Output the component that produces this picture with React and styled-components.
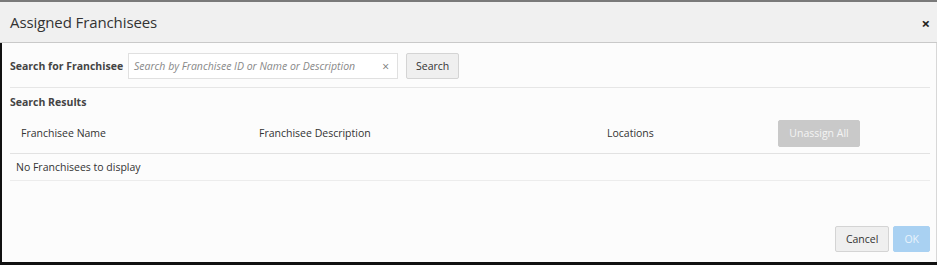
import React from 'react'
import styled, { createGlobalStyle } from 'styled-components'

const GlobalStyle = createGlobalStyle`
  html, body {
    margin: 0;
    padding: 0;
    background: #ffffff;
  }
  body {
    font-family: "Open Sans", "Noto Sans", sans-serif;
    color: #333;
  }
`

const Dialog = styled.div`
  width: 937px;
  height: 265px;
  box-sizing: border-box;
  border-top: 2px solid #7a7a7a;
  border-bottom: 3px solid #111;
  display: flex;
  flex-direction: column;
  background: #fcfcfc;
`

const Header = styled.div`
  height: 40px;
  background: #f0f0f0;
  border-bottom: 1px solid #c9c9c9;
  display: flex;
  align-items: center;
  justify-content: space-between;
  padding: 0 7px 0 10px;
`

const Title = styled.div`
  font-size: 15px;
  color: #333;
  letter-spacing: -0.1px;
`

const Close = styled.div`
  font-size: 15px;
  font-weight: 700;
  color: #222;
  margin-top: 2px;
`

const Body = styled.div`
  flex: 1;
  border-left: 2px solid #111;
  border-right: 1px solid #d8d8d8;
  display: flex;
  flex-direction: column;
  padding: 10px 6px 0 8px;
`

const SearchRow = styled.div`
  display: flex;
  align-items: center;
  height: 26px;
  padding-bottom: 8px;
  border-bottom: 1px solid #e6e6e6;
`

const Label = styled.div`
  font-size: 10.5px;
  font-weight: 700;
  color: #444;
  width: 118px;
`

const InputBox = styled.div`
  width: 270px;
  height: 26px;
  border: 1px solid #e0e0e0;
  background: #fff;
  display: flex;
  align-items: center;
  justify-content: space-between;
  padding: 0 8px 0 5px;
  box-sizing: border-box;
  margin-right: 8px;
`

const Placeholder = styled.span`
  font-size: 10.5px;
  font-style: italic;
  color: #888;
`

const Clear = styled.span`
  font-size: 12px;
  color: #777;
`

const Button = styled.div`
  height: ${p => p.$h || 26}px;
  box-sizing: border-box;
  display: flex;
  align-items: center;
  justify-content: center;
  padding: 0 ${p => p.$px || 10}px;
  font-size: 10.5px;
  border: 1px solid ${p => p.$border || '#d4d4d4'};
  background: ${p => p.$bg || '#efefef'};
  color: ${p => p.$color || '#333'};
  border-radius: 2px;
`

const SectionTitle = styled.div`
  font-size: 10.5px;
  font-weight: 700;
  color: #444;
  margin-top: 7px;
`

const TableHead = styled.div`
  display: grid;
  grid-template-columns: 238px 348px 171px 82px 1fr;
  align-items: center;
  height: 40px;
  padding-left: 11px;
  margin-top: 4px;
  border-bottom: 1px solid #e2e2e2;
  font-size: 10.5px;
  color: #333;
`

const EmptyRow = styled.div`
  height: 26px;
  display: flex;
  align-items: center;
  padding-left: 6px;
  font-size: 10.5px;
  color: #333;
  border-bottom: 1px solid #ececec;
`

const Footer = styled.div`
  margin-top: auto;
  display: flex;
  justify-content: flex-end;
  gap: 4px;
  padding-bottom: 10px;
`

export default function App() {
  return (
    <>
      <GlobalStyle />
      <Dialog>
        <Header>
          <Title>Assigned Franchisees</Title>
          <Close>×</Close>
        </Header>
        <Body>
          <SearchRow>
            <Label>Search for Franchisee</Label>
            <InputBox>
              <Placeholder>Search by Franchisee ID or Name or Description</Placeholder>
              <Clear>×</Clear>
            </InputBox>
            <Button $px={9}>Search</Button>
          </SearchRow>
          <SectionTitle>Search Results</SectionTitle>
          <TableHead>
            <span>Franchisee Name</span>
            <span>Franchisee Description</span>
            <span>Locations</span>
            <Button $bg="#c9c9c9" $border="#c9c9c9" $color="#f4f4f4" $h={27}>Unassign All</Button>
            <span />
          </TableHead>
          <EmptyRow>No Franchisees to display</EmptyRow>
          <Footer>
            <Button $px={10}>Cancel</Button>
            <Button $bg="#a9d1f2" $border="#a9d1f2" $color="#e8f3fc" $px={10}>OK</Button>
          </Footer>
        </Body>
      </Dialog>
    </>
  )
}
